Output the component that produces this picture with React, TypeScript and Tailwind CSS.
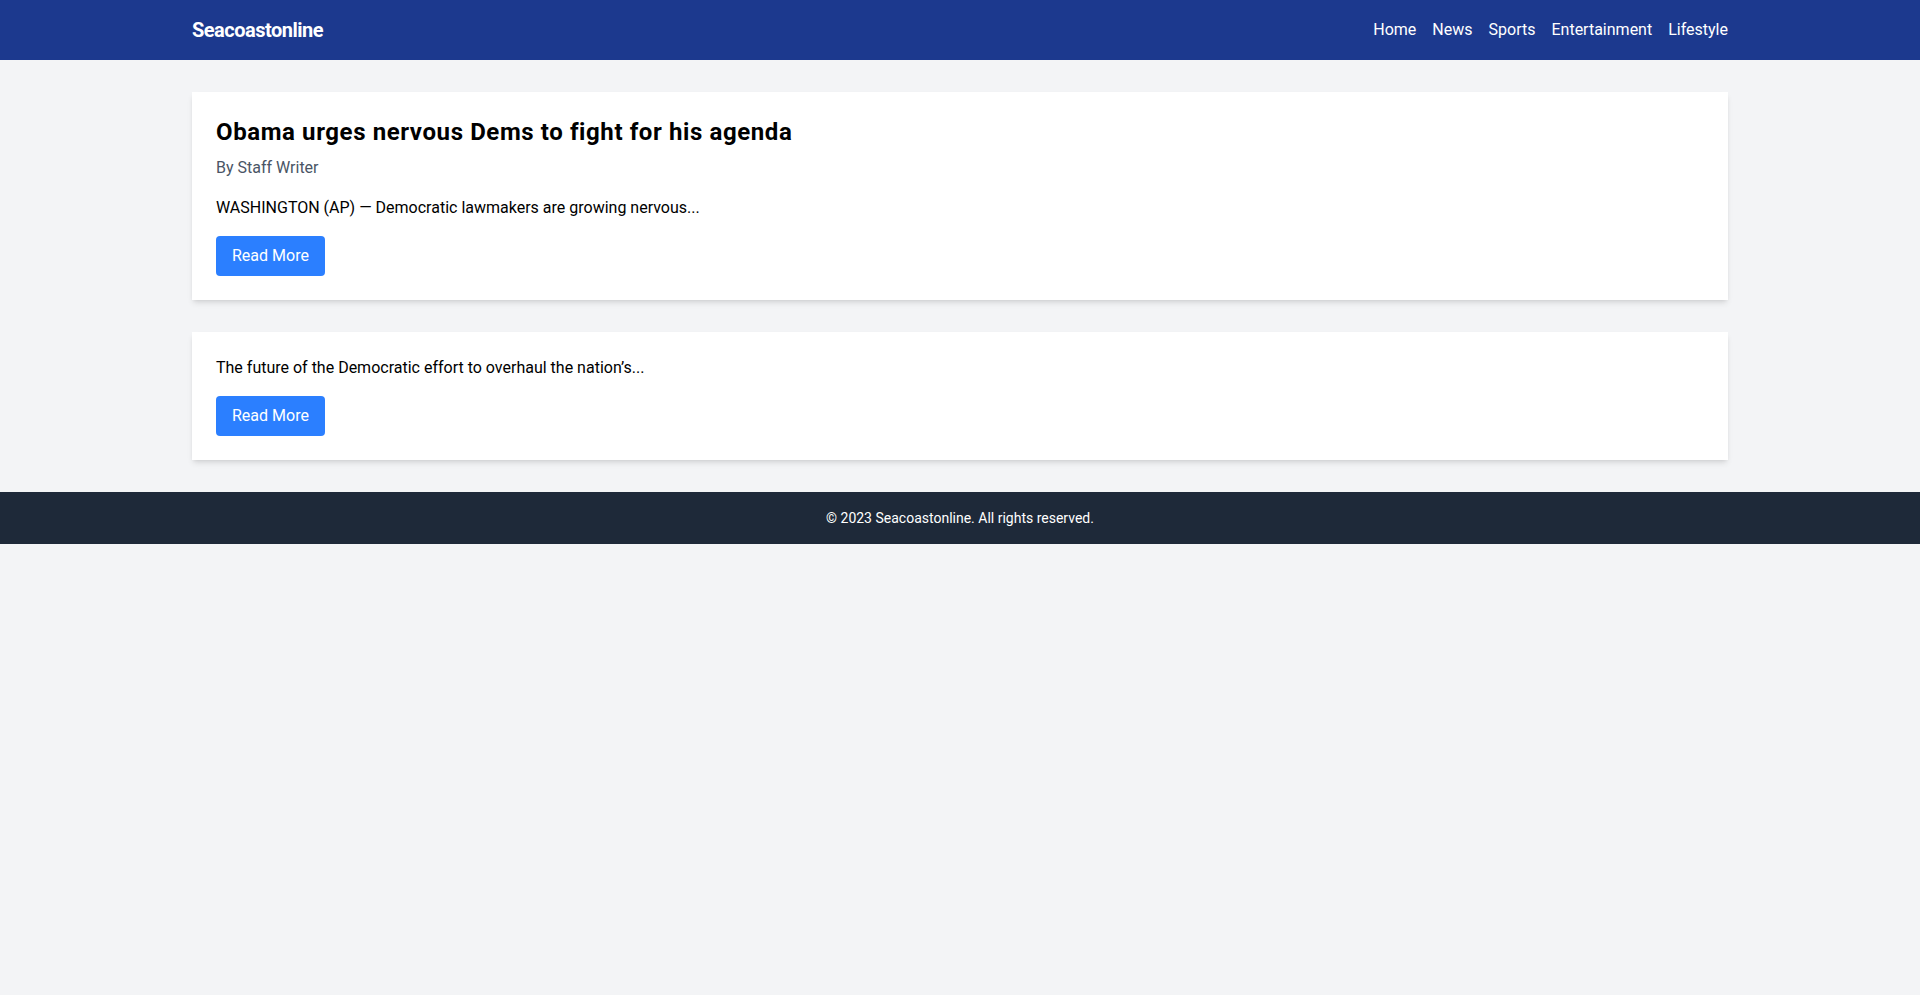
import React from "react";

const articles = [
  {
    title: "Obama urges nervous Dems to fight for his agenda",
    author: "By Staff Writer",
    excerpt: "WASHINGTON (AP) — Democratic lawmakers are growing nervous...",
  },
  {
    title: "",
    author: "",
    excerpt: "The future of the Democratic effort to overhaul the nation’s...",
  },
];

export default function App() {
  const navItems = ["Home", "News", "Sports", "Entertainment", "Lifestyle"];
  return (
    <div className="min-h-screen bg-gray-100 font-['Roboto',sans-serif]">
      {/* Header */}
      <header className="bg-blue-900 text-white p-4">
        <div className="container mx-auto flex justify-between items-center">
          <h1 className="text-xl font-bold tracking-tight">Seacoastonline</h1>
          <nav className="flex space-x-4">
            {navItems.map((item) => (
              <a key={item} href="#" className="hover:underline">
                {item}
              </a>
            ))}
          </nav>
        </div>
      </header>

      {/* Articles */}
      <main className="container mx-auto py-8">
        <div className="flex flex-col space-y-8">
          {articles.map((article, index) => (
            <article key={index} className="bg-white p-6 shadow-md">
              {article.title && (
                <h2 className="text-2xl font-bold tracking-wide mb-2">
                  {article.title}
                </h2>
              )}
              {article.author && (
                <p className="text-gray-600 mb-4">{article.author}</p>
              )}
              <p className="mb-4">{article.excerpt}</p>
              <button className="bg-blue-500 text-white px-4 py-2 rounded">
                Read More
              </button>
            </article>
          ))}
        </div>
      </main>

      {/* Footer */}
      <footer className="bg-gray-800 text-white p-4 text-center text-sm">
        © 2023 Seacoastonline. All rights reserved.
      </footer>
    </div>
  );
}
